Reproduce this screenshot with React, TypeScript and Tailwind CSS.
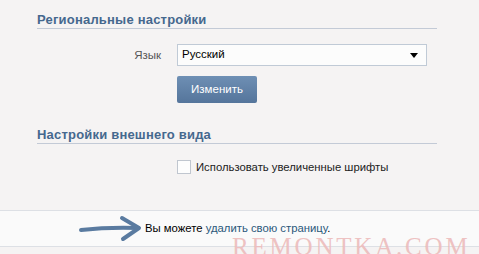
import React from "react";

export default function App() {
  const font = { fontFamily: '"Liberation Sans", Arial, sans-serif' };
  return (
    <div className="relative w-[479px] h-[254px] overflow-hidden bg-[#f5f3f3]" style={font}>
      <div className="pl-[37px] w-[437px] pt-[12px]">
        <div className="h-[17px] leading-[16px] text-[13px] font-bold text-[#45688e] border-b border-[#c3cad6] tracking-[0.2px]">
          Региональные настройки
        </div>
        <div className="flex mt-[15px]">
          <div className="w-[140px] text-right pr-[16px] text-[11.5px] leading-[22px] text-[#555]">Язык</div>
          <div className="flex flex-col">
            <div className="w-[250px] h-[22px] border border-[#c0cad6] bg-[#fcfcfc] flex items-center justify-between pl-[4px] pr-[8px] text-[11.5px] text-black">
              <span>Русский</span>
              <svg width="8" height="5" viewBox="0 0 8 5"><path d="M0 0h8L4 5z" fill="#000" /></svg>
            </div>
            <button className="mt-[10px] w-[80px] h-[27px] rounded-[2px] bg-gradient-to-b from-[#6e8fb4] to-[#55759b] text-white text-[11.5px] leading-[27px] text-center">
              Изменить
            </button>
          </div>
        </div>
        <div className="mt-[24px] h-[17px] leading-[16px] text-[13px] font-bold text-[#45688e] border-b border-[#c3cad6] tracking-[0.2px]">
          Настройки внешнего вида
        </div>
        <div className="flex items-center mt-[16px] pl-[140px]">
          <div className="w-[14px] h-[14px] border border-[#c0c6cf] bg-[#fdfdfd]"></div>
          <span className="ml-[5px] text-[11.3px] text-[#222] leading-[14px]">Использовать увеличенные шрифты</span>
        </div>
      </div>
      <div className="mt-[36px] h-[37px] border-t border-b border-[#dde0e5] bg-[#fafafa] flex items-center">
        <svg className="ml-[78px]" width="64" height="28" viewBox="0 0 64 28">
          <path d="M3 15 Q30 12 60 13" stroke="#5a7ba0" strokeWidth="4" fill="none" strokeLinecap="round" />
          <path d="M44 3 L61 13 L45 24" stroke="#5a7ba0" strokeWidth="4" fill="none" strokeLinecap="round" strokeLinejoin="round" />
        </svg>
        <span className="ml-[3px] text-[11.3px] text-black">
          Вы можете <span className="text-[#2b587a]">удалить свою страницу</span>.
        </span>
      </div>
      <div
        className="absolute left-[232px] top-[234px] text-[25px] leading-[25px] tracking-[2.8px] text-[#edbcbc] opacity-90"
        style={{ fontFamily: '"Liberation Serif", "Times New Roman", serif' }}
      >
        REMONTKA.COM
      </div>
    </div>
  );
}
